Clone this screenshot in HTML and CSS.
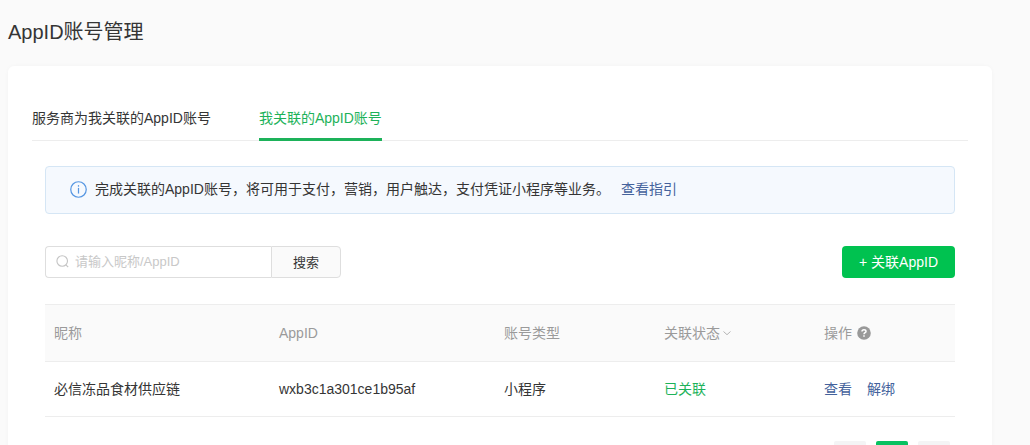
FILE: index.html
```html
<!DOCTYPE html>
<html lang="zh-CN">
<head>
    <meta charset="UTF-8">
    <meta name="viewport" content="width=device-width, initial-scale=1.0">
    <title>AppID账号管理</title>
    <link rel="stylesheet" href="styles.css">
</head>
<body>
    <h1 class="page-title">AppID账号管理</h1>

    <main class="card">
        <nav class="tabs">
            <a class="tab" href="#provider">服务商为我关联的AppID账号</a>
            <a class="tab active" href="#mine">我关联的AppID账号</a>
        </nav>

        <div class="content">
            <div class="notice">
                <svg class="notice-icon" viewBox="0 0 18 18" aria-hidden="true">
                    <circle cx="9" cy="9" r="8.2"/>
                    <path d="M9 7.3v6"/>
                    <path d="M9 4.4v1.6"/>
                </svg>
                <p>完成关联的AppID账号，将可用于支付，营销，用户触达，支付凭证小程序等业务。</p>
                <a class="link" href="#guide">查看指引</a>
            </div>

            <div class="toolbar">
                <form class="search">
                    <label class="search-box">
                        <svg class="search-icon" viewBox="0 0 13 13" aria-hidden="true">
                            <circle cx="6.2" cy="6" r="5.3"/>
                            <path d="M9.8 9.8l2.4 2.2"/>
                        </svg>
                        <input type="text" placeholder="请输入昵称/AppID" aria-label="昵称/AppID">
                    </label>
                    <button type="button" class="search-btn">搜索</button>
                </form>
                <button type="button" class="btn-primary">+ 关联AppID</button>
            </div>

            <table class="table">
                <thead>
                    <tr>
                        <th class="col-name">昵称</th>
                        <th class="col-appid">AppID</th>
                        <th class="col-type">账号类型</th>
                        <th class="col-status">
                            <span class="th-label">关联状态<svg class="arrow-icon" viewBox="0 0 10 10" aria-hidden="true"><path d="M1.5 3.5l3.5 3.2 3.5-3.2"/></svg></span>
                        </th>
                        <th>
                            <span class="th-label">操作<svg class="help-icon" viewBox="0 0 14 14" aria-hidden="true"><circle cx="7" cy="7" r="6.8"/><path d="M5 5.6c0-1.2.9-1.9 2-1.9s2 .7 2 1.7c0 1.2-2 1.4-2 2.8"/><path d="M7 9.3v1.5"/></svg></span>
                        </th>
                    </tr>
                </thead>
                <tbody>
                    <tr>
                        <td>必信冻品食材供应链</td>
                        <td>wxb3c1a301ce1b95af</td>
                        <td>小程序</td>
                        <td class="status-ok">已关联</td>
                        <td>
                            <div class="actions">
                                <a class="link" href="#view">查看</a>
                                <a class="link" href="#unbind">解绑</a>
                            </div>
                        </td>
                    </tr>
                </tbody>
            </table>

            <div class="pager">
                <button type="button" class="page-btn" aria-label="上一页">
                    <svg class="page-icon" viewBox="0 0 10 10" aria-hidden="true"><path d="M6.5 1.5L3 5l3.5 3.5"/></svg>
                </button>
                <button type="button" class="page-btn current">1</button>
                <button type="button" class="page-btn" aria-label="下一页">
                    <svg class="page-icon" viewBox="0 0 10 10" aria-hidden="true"><path d="M3.5 1.5L7 5 3.5 8.5"/></svg>
                </button>
            </div>
        </div>
    </main>
</body>
</html>
```
FILE: styles.css
```css
:root {
    --green: #07c160;
    --tab-green: #1db25a;
    --link: #44629c;
    --text: #353535;
    --muted: #9a9a9a;
    --line: #ededed;
    --bg: #fafafa;
}

* {
    margin: 0;
    padding: 0;
    box-sizing: border-box;
}

body {
    padding: 16px 38px 24px 8px;
    background: var(--bg);
    color: var(--text);
    font-family: "Liberation Sans", "Noto Sans CJK SC", sans-serif;
    font-size: 14px;
    line-height: 22px;
}

button,
input {
    font-family: inherit;
}

button {
    padding-bottom: 2px;
    cursor: pointer;
}

a {
    text-decoration: none;
}

.page-title {
    margin-bottom: 18px;
    font-size: 20px;
    font-weight: 400;
    line-height: 32px;
}

.card {
    padding: 32px 24px 24px;
    border-radius: 6px;
    background: #fff;
    box-shadow: 0 0 4px rgba(0, 0, 0, 0.03);
}

.tabs {
    display: flex;
    gap: 48px;
    border-bottom: 1px solid var(--line);
}

.tab {
    margin-bottom: -1px;
    padding: 9px 0;
    border-bottom: 3px solid transparent;
    color: var(--text);
}

.tab.active {
    border-bottom-color: var(--tab-green);
    color: var(--tab-green);
}

.content {
    padding: 25px 13px 0;
}

.notice {
    display: flex;
    align-items: center;
    min-height: 48px;
    padding: 11px 24px 13px;
    border: 1px solid #d5e6f5;
    border-radius: 4px;
    background: #f5f9fe;
}

.notice-icon {
    flex: none;
    width: 17px;
    height: 17px;
    margin-right: 8px;
    fill: none;
    stroke: #5596e2;
    stroke-width: 1.3;
}

.notice .link {
    margin-left: 11px;
}

.link {
    color: var(--link);
}

.toolbar {
    display: flex;
    justify-content: space-between;
    margin: 32px 0 26px;
}

.search {
    display: flex;
    height: 32px;
}

.search-box {
    display: flex;
    align-items: center;
    width: 226px;
    padding: 0 10px 2px;
    border: 1px solid #dedede;
    border-right: 0;
    border-radius: 4px 0 0 4px;
    background: #fff;
}

.search-icon {
    flex: none;
    width: 13px;
    height: 13px;
    margin-right: 6px;
    fill: none;
    stroke: #c4c4c4;
    stroke-width: 1.1;
}

.search-box input {
    width: 100%;
    min-width: 0;
    border: 0;
    outline: 0;
    background: none;
    color: var(--text);
    font-size: 13px;
}

.search-box input::placeholder {
    color: #c8c8c8;
}

.search-btn {
    width: 70px;
    border: 1px solid #dedede;
    border-radius: 0 4px 4px 0;
    background: var(--bg);
    color: var(--text);
    font-size: 13px;
}

.btn-primary {
    height: 32px;
    padding: 0 17px 2px;
    border: 0;
    border-radius: 4px;
    background: #00c250;
    color: #fff;
    font-size: 14px;
}

.table {
    width: 100%;
    border-collapse: separate;
    border-spacing: 0;
    table-layout: fixed;
}

.table th,
.table td {
    padding: 16px 9px;
    border-bottom: 1px solid var(--line);
    font-weight: 400;
    text-align: left;
}

.table th {
    padding: 17px 9px;
    border-top: 1px solid var(--line);
    background: var(--bg);
    color: var(--muted);
}

.table .status-ok {
    color: var(--tab-green);
}

.col-name,
.col-appid {
    width: 225px;
}

.col-type,
.col-status {
    width: 160px;
}

.th-label {
    display: flex;
    align-items: center;
}

.arrow-icon {
    width: 10px;
    height: 10px;
    margin-left: 2px;
    fill: none;
    stroke: #b5b5b5;
}

.help-icon {
    width: 14px;
    height: 14px;
    margin-left: 5px;
    fill: none;
    stroke: #fff;
    stroke-width: 1.5;
}

.help-icon circle {
    fill: #999;
    stroke: none;
}

.actions {
    display: flex;
    gap: 15px;
}

.pager {
    display: flex;
    justify-content: flex-end;
    margin-top: 24px;
}

.page-btn {
    width: 32px;
    height: 32px;
    margin: 0 5px;
    border: 0;
    border-radius: 2px;
    background: #f4f4f5;
    color: var(--text);
    font-size: 13px;
}

.page-btn.current {
    background: var(--green);
    color: #fff;
}

.page-icon {
    width: 10px;
    height: 10px;
    fill: none;
    stroke: #606266;
}
```
